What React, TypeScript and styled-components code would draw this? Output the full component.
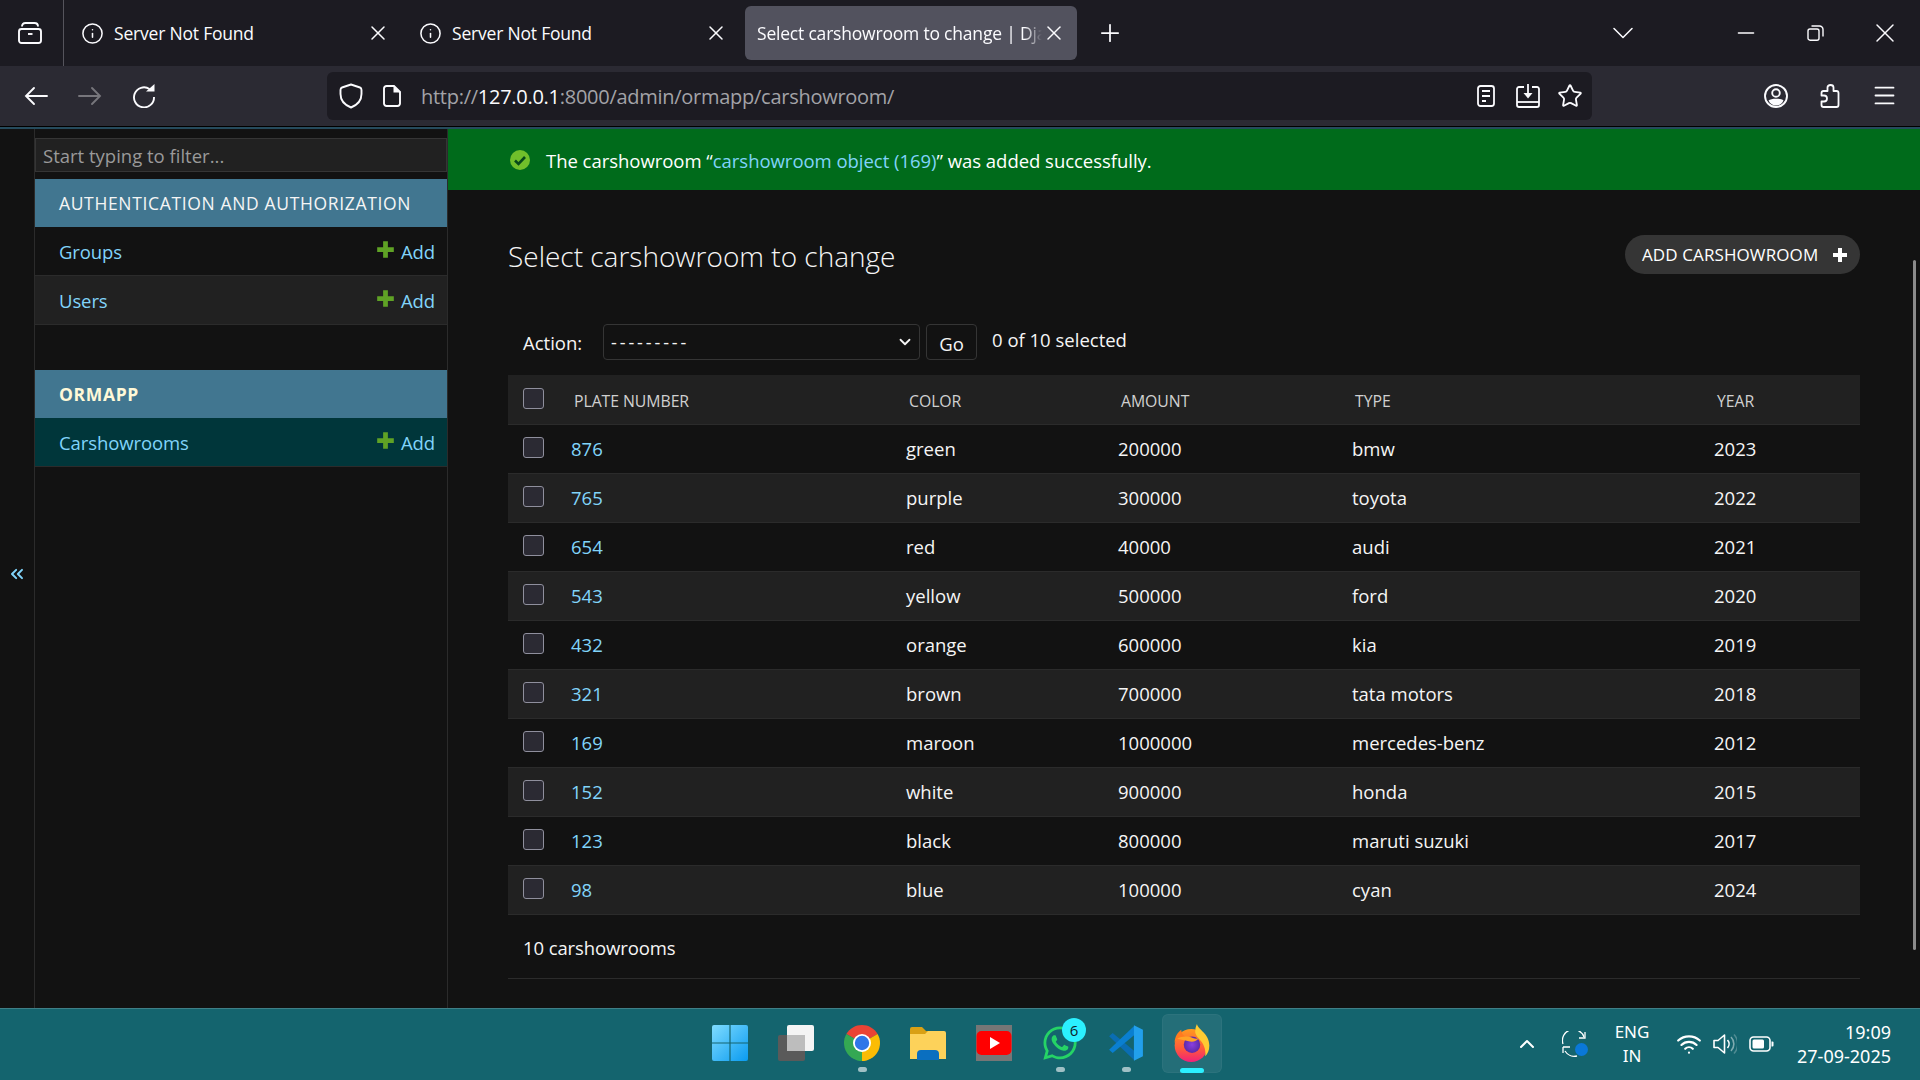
import React from 'react';
import styled, { createGlobalStyle } from 'styled-components';
import { Star, Menu, Info, X, Plus, ChevronDown, ChevronUp, Minus, Wifi, ChevronsLeft } from 'lucide-react';
import { FaWhatsapp } from 'react-icons/fa';

const GlobalStyle = createGlobalStyle`
  html, body { margin: 0; padding: 0; background: #121212; overflow: hidden; }
  * { box-sizing: border-box; }
`;

const Screen = styled.div`
  width: 1920px;
  height: 1080px;
  display: flex;
  flex-direction: column;
  font-family: "Open Sans", "Noto Sans", sans-serif;
  color: #f5f5f5;
  overflow: hidden;
`;

/* browser chrome */
const TitleBar = styled.div`
  height: 66px;
  flex: none;
  background: #1c1b22;
  display: flex;
  align-items: center;
`;
const TabGroupsButton = styled.div`
  width: 64px;
  height: 66px;
  flex: none;
  margin-right: -1px;
  padding-right: 4px;
  border-right: 1px solid #55545c;
  display: flex;
  align-items: center;
  justify-content: center;
`;
const Tab = styled.div<{ $active?: boolean }>`
  width: 332px;
  height: 54px;
  flex: none;
  margin-left: 6px;
  padding: 0 11px 0 12px;
  border-radius: 6px;
  display: flex;
  align-items: center;
  gap: 10px;
  font-size: 17.5px;
  letter-spacing: -0.2px;
  color: #fbfbfe;
  background: ${(p) => (p.$active ? '#52525e' : 'transparent')};
`;
const TabTitle = styled.span<{ $fade?: boolean }>`
  flex: 1;
  white-space: nowrap;
  overflow: hidden;
  ${(p) => p.$fade && 'margin-right: -10px; mask-image: linear-gradient(to right, #000 94%, transparent 100%);'}
`;
const NewTab = styled.div`
  width: 46px;
  margin-left: 10px;
  display: flex;
  justify-content: center;
`;
const WindowControls = styled.div`
  margin-left: auto;
  display: flex;
  align-items: center;
`;
const TabListButton = styled.div`
  width: 46px;
  margin-right: 66px;
  display: flex;
  justify-content: center;
`;
const WindowButton = styled.div`
  width: 69.5px;
  display: flex;
  justify-content: center;
`;

const NavBar = styled.div`
  height: 61px;
  flex: none;
  padding: 0 9px 1px;
  background: #2b2a33;
  border-bottom: 1px solid #000;
  display: flex;
  align-items: center;
`;
const NavButton = styled.div<{ $dim?: boolean }>`
  width: 54px;
  flex: none;
  display: flex;
  justify-content: center;
  color: ${(p) => (p.$dim ? '#77767c' : '#fbfbfe')};
`;
const UrlBar = styled.div`
  width: 1265px;
  height: 48px;
  margin-left: 156px;
  padding: 0 1px 0 12px;
  border-radius: 6px;
  background: #1c1b22;
  display: flex;
  align-items: center;
`;
const UrlIcon = styled.div`
  width: 42px;
  flex: none;
  display: flex;
  justify-content: flex-start;
  & + & { padding-left: 2px; }
`;
const UrlText = styled.div`
  flex: 1;
  margin-left: -2px;
  padding-top: 2px;
  font-size: 20px;
  letter-spacing: -0.27px;
  color: #a3a3a8;
  white-space: nowrap;
  b { font-weight: 400; color: #fbfbfe; }
`;
const UrlAction = styled.div`
  width: 42px;
  flex: none;
  display: flex;
  justify-content: center;
`;
const NavRight = styled.div`
  margin-left: auto;
  display: flex;
  align-items: center;
`;
const NavRightButton = styled.div`
  width: 54px;
  display: flex;
  justify-content: center;
`;
const ThemeBand = styled.div`
  height: 2px;
  flex: none;
  background: #264b5d;
`;

/* django admin */
const Page = styled.div`
  flex: 1;
  min-height: 0;
  display: flex;
  background: #121212;
`;
const Toggle = styled.div`
  width: 35px;
  flex: none;
  padding-top: 10px;
  border-right: 1px solid #2b2b2b;
  display: flex;
  align-items: center;
  justify-content: center;
  color: #81d4fa;
`;
const Sidebar = styled.nav`
  width: 413px;
  flex: none;
  padding-top: 9px;
  border-right: 1px solid #2b2b2b;
`;
const Filter = styled.input`
  display: block;
  width: 100%;
  height: 34px;
  margin-bottom: 7px;
  padding: 1px 7px 0;
  border: 1px solid #353535;
  background: #212121;
  color: #f5f5f5;
  font: inherit;
  font-size: 18.5px;
  &::placeholder { color: #9a9a9a; opacity: 1; }
`;
const ModuleHeader = styled.div<{ $strong?: boolean }>`
  height: 48px;
  padding-left: 24px;
  display: flex;
  align-items: center;
  background: #417690;
  color: ${(p) => (p.$strong ? '#fff9d8' : '#f5f5f5')};
  font-size: 17.5px;
  letter-spacing: 0.65px;
  font-weight: ${(p) => (p.$strong ? 700 : 400)};
`;
const ModuleRow = styled.div<{ $alt?: boolean; $current?: boolean }>`
  height: 49px;
  padding: 0 12px 0 24px;
  display: flex;
  align-items: center;
  justify-content: space-between;
  border-bottom: 1px solid #2b2b2b;
  font-size: 18.5px;
  letter-spacing: -0.1px;
  background: ${(p) => (p.$current ? '#00363a' : p.$alt ? '#212121' : '#121212')};
`;
const Link = styled.a`
  color: #81d4fa;
  text-decoration: none;
`;
const AddLink = styled(Link)`
  display: flex;
  align-items: center;
  gap: 6px;
  svg { margin-bottom: 3px; }
`;
const Module = styled.section`
  margin-bottom: 45px;
`;

const Main = styled.main`
  flex: 1;
  min-width: 0;
  position: relative;
`;
const Message = styled.div`
  height: 61px;
  padding: 1px 0 0 62px;
  display: flex;
  align-items: center;
  gap: 16px;
  background: #006b1b;
  color: #fff;
  font-size: 18.5px;
  letter-spacing: -0.03px;
`;
const Content = styled.div`
  padding: 45px 60px 0;
`;
const ContentHeader = styled.div`
  height: 39px;
  margin-bottom: 50px;
  display: flex;
  align-items: center;
  justify-content: space-between;
`;
const Title = styled.h1`
  margin: 3px 0 0;
  font-size: 28px;
  font-weight: 300;
  color: #f5f5f5;
`;
const AddButton = styled.a`
  width: 235px;
  height: 39px;
  padding: 0 12px 0 17px;
  border-radius: 20px;
  background: #353535;
  display: flex;
  align-items: center;
  justify-content: space-between;
  font-size: 17px;
  letter-spacing: 0.1px;
  color: #fff;
`;
const Actions = styled.div`
  height: 36px;
  margin-bottom: 15px;
  padding-left: 15px;
  display: flex;
  align-items: center;
  font-size: 18.5px;
`;
const ActionLabel = styled.span`
  width: 80px;
  flex: none;
  padding-top: 1px;
`;
const SelectWrap = styled.div`
  position: relative;
  width: 317px;
`;
const ActionSelect = styled.select`
  appearance: none;
  display: block;
  width: 100%;
  height: 36px;
  padding: 0 7px;
  border: 1px solid #353535;
  border-radius: 4px;
  background: #121212;
  color: #f5f5f5;
  font: inherit;
  font-size: 18px;
  letter-spacing: 2.9px;
`;
const SelectArrow = styled.span`
  position: absolute;
  right: 6px;
  top: 9px;
  display: flex;
  color: #f5f5f5;
`;
const GoButton = styled.button`
  width: 51px;
  height: 36px;
  margin-left: 6px;
  border: 1px solid #353535;
  border-radius: 4px;
  background: #121212;
  color: #f5f5f5;
  font: inherit;
  padding: 2px 0 0;
`;
const Counter = styled.span`
  margin: -5px 0 0 15px;
`;
const Table = styled.table`
  width: 1352px;
  border-collapse: collapse;
  table-layout: fixed;
`;
const HeadCell = styled.th`
  height: 49px;
  padding: 3px 0 0 11px;
  text-align: left;
  font-size: 15.8px;
  font-weight: 400;
  letter-spacing: -0.05px;
  color: #d0d0d0;
  background: #212121;
  border-bottom: 1px solid #2b2b2b;
  text-transform: uppercase;
`;
const Row = styled.tr<{ $alt: boolean }>`
  background: ${(p) => (p.$alt ? '#212121' : '#121212')};
`;
const Cell = styled.td`
  height: 49px;
  padding: 0 0 1px 8px;
  font-size: 18.5px;
  color: #f5f5f5;
  border-bottom: 1px solid #2b2b2b;
`;
const CheckCell = styled(Cell)`
  padding: 0 0 2px 15px;
`;
const CheckHead = styled(HeadCell)`
  padding: 0 0 2px 15px;
`;
const Checkbox = styled.input.attrs({ type: 'checkbox' })`
  appearance: none;
  display: block;
  width: 21px;
  height: 21px;
  margin: 0;
  border: 1px solid #8f8f9d;
  border-radius: 3px;
  background: #2b2a33;
`;
const Paginator = styled.div`
  height: 64px;
  padding: 3px 0 0 15px;
  display: flex;
  align-items: center;
  border-bottom: 1px solid #2b2b2b;
  font-size: 18.5px;
  letter-spacing: -0.1px;
  color: #f5f5f5;
`;
const ScrollThumb = styled.div`
  position: absolute;
  right: 4px;
  top: 131px;
  width: 3px;
  height: 690px;
  border-radius: 2px;
  background: #8b8b8b;
`;

/* windows taskbar */
const Taskbar = styled.footer`
  height: 72px;
  flex: none;
  padding-top: 5px;
  border-top: 1px solid #3f7f87;
  background: #14646e;
  display: flex;
  align-items: flex-start;
`;
const TaskIcons = styled.div`
  margin-left: 700px;
  display: flex;
  gap: 6px;
`;
const TaskItem = styled.div<{ $active?: boolean }>`
  position: relative;
  width: 60px;
  height: 59px;
  border-radius: 6px;
  display: flex;
  align-items: center;
  justify-content: center;
  padding-bottom: 1px;
  ${(p) => p.$active && 'background: rgba(255, 255, 255, 0.07); box-shadow: inset 0 0 0 1px rgba(255,255,255,0.04);'}
`;
const RunningDot = styled.span<{ $active?: boolean }>`
  position: absolute;
  bottom: ${(p) => (p.$active ? '0' : '1px')};
  left: 50%;
  width: ${(p) => (p.$active ? '24px' : '9px')};
  height: 5px;
  margin-left: ${(p) => (p.$active ? '-12px' : '-4px')};
  border-radius: 3px;
  background: ${(p) => (p.$active ? '#2bf0ff' : '#9fc0c5')};
`;
const Badge = styled.span`
  position: absolute;
  top: 4px;
  right: 4px;
  width: 24px;
  height: 24px;
  border-radius: 50%;
  background: #2bf0ff;
  color: #10222a;
  font-size: 15px;
  line-height: 24px;
  text-align: center;
`;
const Tray = styled.div`
  margin-left: auto;
  padding: 6px 29px 0 0;
  display: flex;
  align-items: center;
  color: #fff;
`;
const TrayIcon = styled.div<{ $w: number }>`
  position: relative;
  width: ${(p) => p.$w}px;
  display: flex;
  justify-content: center;
`;
const SyncDot = styled.span`
  position: absolute;
  left: 24px;
  top: 12px;
  width: 13px;
  height: 13px;
  border-radius: 50%;
  background: #0a78d8;
`;
const Lang = styled.div`
  width: 66px;
  margin-right: 6px;
  text-align: center;
  font-size: 17px;
  line-height: 24px;
  font-family: "Noto Sans", sans-serif;
`;
const Clock = styled.div`
  width: 112px;
  text-align: right;
  font-size: 18px;
  line-height: 24px;
  font-family: "Noto Sans", sans-serif;
  white-space: nowrap;
`;

const TabGroupsIcon = () => (
  <svg width="24" height="22" viewBox="0 0 24 22" fill="none" stroke="#fbfbfe" strokeWidth="1.9">
    <path d="M4 4.5Q4 1 7.5 1h9Q20 1 20 4.5" />
    <rect x="1" y="7" width="22" height="14" rx="2.5" />
    <path d="M10 12h4.5" />
  </svg>
);
const BackIcon = () => (
  <svg width="24" height="22" viewBox="0 0 24 22" fill="none" stroke="currentColor" strokeWidth="1.9" strokeLinecap="round">
    <path d="M23 11H2M10 3l-8 8 8 8" />
  </svg>
);
const ForwardIcon = () => (
  <svg width="24" height="22" viewBox="0 0 24 22" fill="none" stroke="currentColor" strokeWidth="1.9" strokeLinecap="round">
    <path d="M1 11h21M14 3l8 8-8 8" />
  </svg>
);
const ReloadIcon = () => (
  <svg width="24" height="24" viewBox="0 0 24 24" fill="none" stroke="currentColor" strokeWidth="1.9">
    <path d="M17.5 5A10 10 0 1 0 22 13" />
    <path d="M14 7.5h8.5V0z" fill="currentColor" stroke="none" />
  </svg>
);
const ShieldIcon = () => (
  <svg width="24" height="26" viewBox="0 0 24 26" fill="none" stroke="#fbfbfe" strokeWidth="1.9" strokeLinejoin="round">
    <path d="M12 1.5 21 4.5Q22.5 5 22.5 7V11C22.5 18 17 22.5 12 24.5 7 22.5 1.5 18 1.5 11V7Q1.5 5 3 4.5Z" />
  </svg>
);
const PageIcon = () => (
  <svg width="18" height="22" viewBox="0 0 18 22" fill="none" stroke="#fbfbfe" strokeWidth="1.9">
    <path d="M11 1H3.5A2.5 2.5 0 0 0 1 3.5v15A2.5 2.5 0 0 0 3.5 21h11a2.5 2.5 0 0 0 2.5-2.5V7z" />
    <path d="M10.5 1 17 7.5h-6.5z" fill="#fbfbfe" stroke="none" />
  </svg>
);
const ReaderIcon = () => (
  <svg width="18" height="22" viewBox="0 0 18 22" fill="none" stroke="#fbfbfe" strokeWidth="1.8">
    <rect x="1" y="1" width="16" height="20" rx="2.5" />
    <path d="M5 6h8M5 11h8M5 16h4" />
  </svg>
);
const SaveIcon = () => (
  <svg width="24" height="24" viewBox="0 0 24 24" fill="none" stroke="#fbfbfe" strokeWidth="1.8">
    <path d="M8 3H3a2 2 0 0 0-2 2v16a2 2 0 0 0 2 2h18a2 2 0 0 0 2-2V5a2 2 0 0 0-2-2h-5" />
    <path d="M1 18h22" />
    <path d="M12 0v10" />
    <path d="M7.5 9h9L12 14.5z" fill="#fbfbfe" stroke="none" />
  </svg>
);
const ProfileIcon = () => (
  <svg width="24" height="24" viewBox="0 0 24 24" fill="none" stroke="#fbfbfe" strokeWidth="1.9">
    <circle cx="12" cy="12" r="11" />
    <circle cx="12" cy="9" r="3.8" />
    <path d="M4.5 16.5C7 14 17 14 19.5 16.5 18 20 15 21.5 12 21.5S6 20 4.5 16.5z" fill="#fbfbfe" stroke="none" />
  </svg>
);
const ExtensionsIcon = () => (
  <svg width="20" height="24" viewBox="0 0 19 24" fill="none" stroke="#fbfbfe" strokeWidth="1.8" strokeLinejoin="round">
    <path d="M7 7V3.5Q7 1 10 1T13 3.5V7h3q2 0 2 2v12q0 2-2 2H3q-2 0-2-2v-3.5h2.5q3 0 3-3t-3-3H1V9q0-2 2-2z" />
  </svg>
);
const RestoreIcon = () => (
  <svg width="17" height="16" viewBox="0 0 17 16" fill="none" stroke="#fbfbfe" strokeWidth="1.4">
    <rect x="1" y="4" width="11" height="11.2" rx="2" />
    <path d="M4.5 1h8a3.5 3.5 0 0 1 3.5 3.5v7" />
  </svg>
);
const PlusMark = ({ color, size }: { color: string; size: number }) => (
  <svg width={size} height={size} viewBox="0 0 16 16" fill={color}>
    <path d="M6 1h4v5h5v4h-5v5H6v-5H1V6h5z" />
  </svg>
);
const CheckMark = () => (
  <svg width="20" height="20" viewBox="0 0 20 20">
    <circle cx="10" cy="10" r="10" fill="#70bf2b" />
    <path d="M5 10.5l3.5 3.5L15 7" fill="none" stroke="#06481a" strokeWidth="2.6" />
  </svg>
);
const WindowsLogo = () => (
  <svg width="36" height="36" viewBox="0 0 36 36">
    <defs>
      <linearGradient id="winG" x1="0" y1="0" x2="1" y2="1">
        <stop offset="0" stopColor="#7fdcff" />
        <stop offset="1" stopColor="#0a9bf0" />
      </linearGradient>
    </defs>
    <path fill="url(#winG)" d="M2 0h15.4v17.4H0V2a2 2 0 0 1 2-2zM18.6 0H34a2 2 0 0 1 2 2v15.4H18.6zM0 18.6h17.4V36H2a2 2 0 0 1-2-2zM18.6 18.6H36V34a2 2 0 0 1-2 2H18.6z" />
  </svg>
);
const TaskViewIcon = () => (
  <svg width="36" height="36" viewBox="0 0 36 36">
    <rect x="0" y="10" width="27" height="26" rx="2" fill="#5a5a5a" />
    <rect x="9" y="0" width="27" height="26" rx="2" fill="#f4f4f4" />
    <rect x="9" y="10" width="18" height="16" fill="#bdbdbd" />
  </svg>
);
const ChromeLogo = () => (
  <svg width="36" height="36" viewBox="4 4 40 40">
    <path fill="#ea4335" d="M24 24 6.68 14A20 20 0 0 1 41.32 14z" />
    <path fill="#fbbc04" d="M24 24 41.32 14A20 20 0 0 1 24 44z" />
    <path fill="#34a853" d="M24 24V44A20 20 0 0 1 6.68 14z" />
    <circle cx="24" cy="24" r="10" fill="#fff" />
    <circle cx="24" cy="24" r="8" fill="#2f76e8" />
  </svg>
);
const FolderIcon = () => (
  <svg width="36" height="36" viewBox="0 0 36 36">
    <path fill="#d9a014" d="M0 4a2 2 0 0 1 2-2h10l4 4h18v8H0z" />
    <path fill="#fdd25a" d="M0 9h15l3-3h16a2 2 0 0 1 2 2v26H0z" />
    <path fill="#0a6fc0" d="M7 35v-6a4 4 0 0 1 4-4h14a4 4 0 0 1 4 4v6z" />
  </svg>
);
const YoutubeIcon = () => (
  <svg width="36" height="36" viewBox="0 0 36 36">
    <rect width="36" height="36" fill="#767676" />
    <rect x="0.5" y="6" width="35" height="24" rx="5" fill="#ff0000" />
    <path d="M14 12l10 6-10 6z" fill="#fff" />
  </svg>
);
const VsCodeLogo = () => (
  <svg width="36" height="38" viewBox="0 0 100 100" preserveAspectRatio="none">
    <path fill="#0a6db3" d="M3 32 13 24 74 72V96z" />
    <path fill="#0a7fd0" d="M3 68 13 76 74 28V4z" />
    <path fill="#22a0ec" d="M72 3 97 15V85L72 97z" />
  </svg>
);
const FirefoxLogo = () => (
  <svg width="38" height="38" viewBox="2 1 44 46">
    <defs>
      <linearGradient id="ffBody" x1="0.5" y1="0" x2="0.5" y2="1">
        <stop offset="0" stopColor="#ff9a1f" />
        <stop offset="0.6" stopColor="#ff5a3a" />
        <stop offset="1" stopColor="#f0207a" />
      </linearGradient>
      <radialGradient id="ffCore">
        <stop offset="0" stopColor="#8a3fe0" />
        <stop offset="1" stopColor="#5b2aa8" />
      </radialGradient>
    </defs>
    <circle cx="23" cy="27" r="20" fill="url(#ffBody)" />
    <path fill="#ffcb32" d="M30 1c1 7 15 11 15 26 0 6-2 10-5 13 1-6-1-13-5-18-3-4-8-8-7-13 0-3 1-6 2-8z" />
    <path fill="#ff7a1f" d="M3 24C3 16 7 11 11 8c0 4 2 7 5 8-6 1-11 3-13 8z" />
    <circle cx="24" cy="26" r="10" fill="url(#ffCore)" />
    <path fill="#ffa326" d="M6 19c5-3 12-4 19-1 3 1 5 1 7 0-2 4-7 5-12 4-5-1-10-2-14-3z" />
  </svg>
);
const SyncIcon = () => (
  <svg width="26" height="26" viewBox="0 0 26 26" fill="none" stroke="#fff" strokeWidth="1.3">
    <path d="M1 13A11 11 0 0 1 22 6" />
    <path d="M23 1v6h-6" />
    <path d="M3 20a11 11 0 0 0 12 5" />
    <path d="M1 16h7M1 16l0 6" />
  </svg>
);
const VolumeIcon = () => (
  <svg width="24" height="24" viewBox="0 0 24 24" fill="none" stroke="#fff" strokeWidth="1.6" strokeLinejoin="round">
    <path d="M1 8.5h4L11.5 3v18L5 15.5H1z" />
    <path d="M14.5 8a6 6 0 0 1 0 8" />
    <path d="M18 5a10 10 0 0 1 0 14" opacity="0.45" />
    <path d="M21 2.5a14 14 0 0 1 0 19" opacity="0.25" />
  </svg>
);
const BatteryIcon = () => (
  <svg width="25" height="16" viewBox="0 0 25 16" fill="none">
    <rect x="1" y="1" width="20" height="14" rx="3.5" stroke="#fff" strokeWidth="1.6" />
    <rect x="3.5" y="3.5" width="11.5" height="9" rx="1.5" fill="#fff" />
    <path d="M22.5 5.5h1a1 1 0 0 1 1 1v3a1 1 0 0 1-1 1h-1z" fill="#fff" />
  </svg>
);

interface Showroom {
  plate: string;
  color: string;
  amount: string;
  type: string;
  year: string;
}

const showrooms: Showroom[] = [
  { plate: '876', color: 'green', amount: '200000', type: 'bmw', year: '2023' },
  { plate: '765', color: 'purple', amount: '300000', type: 'toyota', year: '2022' },
  { plate: '654', color: 'red', amount: '40000', type: 'audi', year: '2021' },
  { plate: '543', color: 'yellow', amount: '500000', type: 'ford', year: '2020' },
  { plate: '432', color: 'orange', amount: '600000', type: 'kia', year: '2019' },
  { plate: '321', color: 'brown', amount: '700000', type: 'tata motors', year: '2018' },
  { plate: '169', color: 'maroon', amount: '1000000', type: 'mercedes-benz', year: '2012' },
  { plate: '152', color: 'white', amount: '900000', type: 'honda', year: '2015' },
  { plate: '123', color: 'black', amount: '800000', type: 'maruti suzuki', year: '2017' },
  { plate: '98', color: 'blue', amount: '100000', type: 'cyan', year: '2024' },
];

const App = () => {
  return (
    <Screen>
      <GlobalStyle />
      <TitleBar>
        <TabGroupsButton>
          <TabGroupsIcon />
        </TabGroupsButton>
        <Tab>
          <Info size={23} strokeWidth={1.6} />
          <TabTitle>Server Not Found</TabTitle>
          <X size={24} strokeWidth={1.5} />
        </Tab>
        <Tab>
          <Info size={23} strokeWidth={1.6} />
          <TabTitle>Server Not Found</TabTitle>
          <X size={24} strokeWidth={1.5} />
        </Tab>
        <Tab $active>
          <TabTitle $fade>Select carshowroom to change | Django site admin</TabTitle>
          <X size={24} strokeWidth={1.5} />
        </Tab>
        <NewTab>
          <Plus size={28} strokeWidth={1.5} color="#fbfbfe" />
        </NewTab>
        <WindowControls>
          <TabListButton>
            <ChevronDown size={36} strokeWidth={1.05} color="#fbfbfe" />
          </TabListButton>
          <WindowButton>
            <Minus size={26} strokeWidth={1.3} color="#fbfbfe" />
          </WindowButton>
          <WindowButton>
            <RestoreIcon />
          </WindowButton>
          <WindowButton>
            <X size={32} strokeWidth={1.1} color="#fbfbfe" />
          </WindowButton>
        </WindowControls>
      </TitleBar>
      <NavBar>
        <NavButton>
          <BackIcon />
        </NavButton>
        <NavButton $dim>
          <ForwardIcon />
        </NavButton>
        <NavButton>
          <ReloadIcon />
        </NavButton>
        <UrlBar>
          <UrlIcon>
            <ShieldIcon />
          </UrlIcon>
          <UrlIcon>
            <PageIcon />
          </UrlIcon>
          <UrlText>
            http://<b>127.0.0.1</b>:8000/admin/ormapp/carshowroom/
          </UrlText>
          <UrlAction>
            <ReaderIcon />
          </UrlAction>
          <UrlAction>
            <SaveIcon />
          </UrlAction>
          <UrlAction>
            <Star size={26} strokeWidth={1.7} color="#fbfbfe" />
          </UrlAction>
        </UrlBar>
        <NavRight>
          <NavRightButton>
            <ProfileIcon />
          </NavRightButton>
          <NavRightButton>
            <ExtensionsIcon />
          </NavRightButton>
          <NavRightButton>
            <Menu size={27} strokeWidth={1.6} color="#fbfbfe" />
          </NavRightButton>
        </NavRight>
      </NavBar>
      <ThemeBand />
      <Page>
        <Toggle>
          <ChevronsLeft size={20} strokeWidth={2.4} />
        </Toggle>
        <Sidebar>
          <Filter placeholder="Start typing to filter..." />
          <Module>
            <ModuleHeader>AUTHENTICATION AND AUTHORIZATION</ModuleHeader>
            <ModuleRow>
              <Link>Groups</Link>
              <AddLink>
                <PlusMark color="#5fa225" size={19} />
                Add
              </AddLink>
            </ModuleRow>
            <ModuleRow $alt>
              <Link>Users</Link>
              <AddLink>
                <PlusMark color="#5fa225" size={19} />
                Add
              </AddLink>
            </ModuleRow>
          </Module>
          <Module>
            <ModuleHeader $strong>ORMAPP</ModuleHeader>
            <ModuleRow $current>
              <Link>Carshowrooms</Link>
              <AddLink>
                <PlusMark color="#5fa225" size={19} />
                Add
              </AddLink>
            </ModuleRow>
          </Module>
        </Sidebar>
        <Main>
          <Message>
            <CheckMark />
            <span>
              The carshowroom “<Link>carshowroom object (169)</Link>” was added successfully.
            </span>
          </Message>
          <Content>
            <ContentHeader>
              <Title>Select carshowroom to change</Title>
              <AddButton>
                ADD CARSHOWROOM
                <PlusMark color="#fff" size={16} />
              </AddButton>
            </ContentHeader>
            <Actions>
              <ActionLabel>Action:</ActionLabel>
              <SelectWrap>
                <ActionSelect>
                  <option>---------</option>
                </ActionSelect>
                <SelectArrow>
                  <ChevronDown size={18} strokeWidth={2.4} />
                </SelectArrow>
              </SelectWrap>
              <GoButton>Go</GoButton>
              <Counter>0 of 10 selected</Counter>
            </Actions>
            <Table>
              <colgroup>
                <col width="55" />
                <col width="335" />
                <col width="212" />
                <col width="234" />
                <col width="362" />
                <col width="154" />
              </colgroup>
              <thead>
                <tr>
                  <CheckHead>
                    <Checkbox />
                  </CheckHead>
                  <HeadCell>Plate number</HeadCell>
                  <HeadCell>Color</HeadCell>
                  <HeadCell>Amount</HeadCell>
                  <HeadCell>Type</HeadCell>
                  <HeadCell>Year</HeadCell>
                </tr>
              </thead>
              <tbody>
                {showrooms.map((s, i) => (
                  <Row key={s.plate} $alt={i % 2 === 1}>
                    <CheckCell>
                      <Checkbox />
                    </CheckCell>
                    <Cell>
                      <Link>{s.plate}</Link>
                    </Cell>
                    <Cell>{s.color}</Cell>
                    <Cell>{s.amount}</Cell>
                    <Cell>{s.type}</Cell>
                    <Cell>{s.year}</Cell>
                  </Row>
                ))}
              </tbody>
            </Table>
            <Paginator>10 carshowrooms</Paginator>
          </Content>
          <ScrollThumb />
        </Main>
      </Page>
      <Taskbar>
        <TaskIcons>
          <TaskItem>
            <WindowsLogo />
          </TaskItem>
          <TaskItem>
            <TaskViewIcon />
          </TaskItem>
          <TaskItem>
            <ChromeLogo />
            <RunningDot />
          </TaskItem>
          <TaskItem>
            <FolderIcon />
          </TaskItem>
          <TaskItem>
            <YoutubeIcon />
          </TaskItem>
          <TaskItem>
            <FaWhatsapp size={38} color="#25d366" />
            <Badge>6</Badge>
            <RunningDot />
          </TaskItem>
          <TaskItem>
            <VsCodeLogo />
            <RunningDot />
          </TaskItem>
          <TaskItem $active>
            <FirefoxLogo />
            <RunningDot $active />
          </TaskItem>
        </TaskIcons>
        <Tray>
          <TrayIcon $w={48}>
            <ChevronUp size={24} strokeWidth={2} />
          </TrayIcon>
          <TrayIcon $w={48}>
            <SyncIcon />
            <SyncDot />
          </TrayIcon>
          <Lang>
            ENG
            <br />
            IN
          </Lang>
          <TrayIcon $w={36}>
            <Wifi size={26} strokeWidth={2} />
          </TrayIcon>
          <TrayIcon $w={36}>
            <VolumeIcon />
          </TrayIcon>
          <TrayIcon $w={36}>
            <BatteryIcon />
          </TrayIcon>
          <Clock>
            19:09
            <br />
            27-09-2025
          </Clock>
        </Tray>
      </Taskbar>
    </Screen>
  );
};

export default App;
